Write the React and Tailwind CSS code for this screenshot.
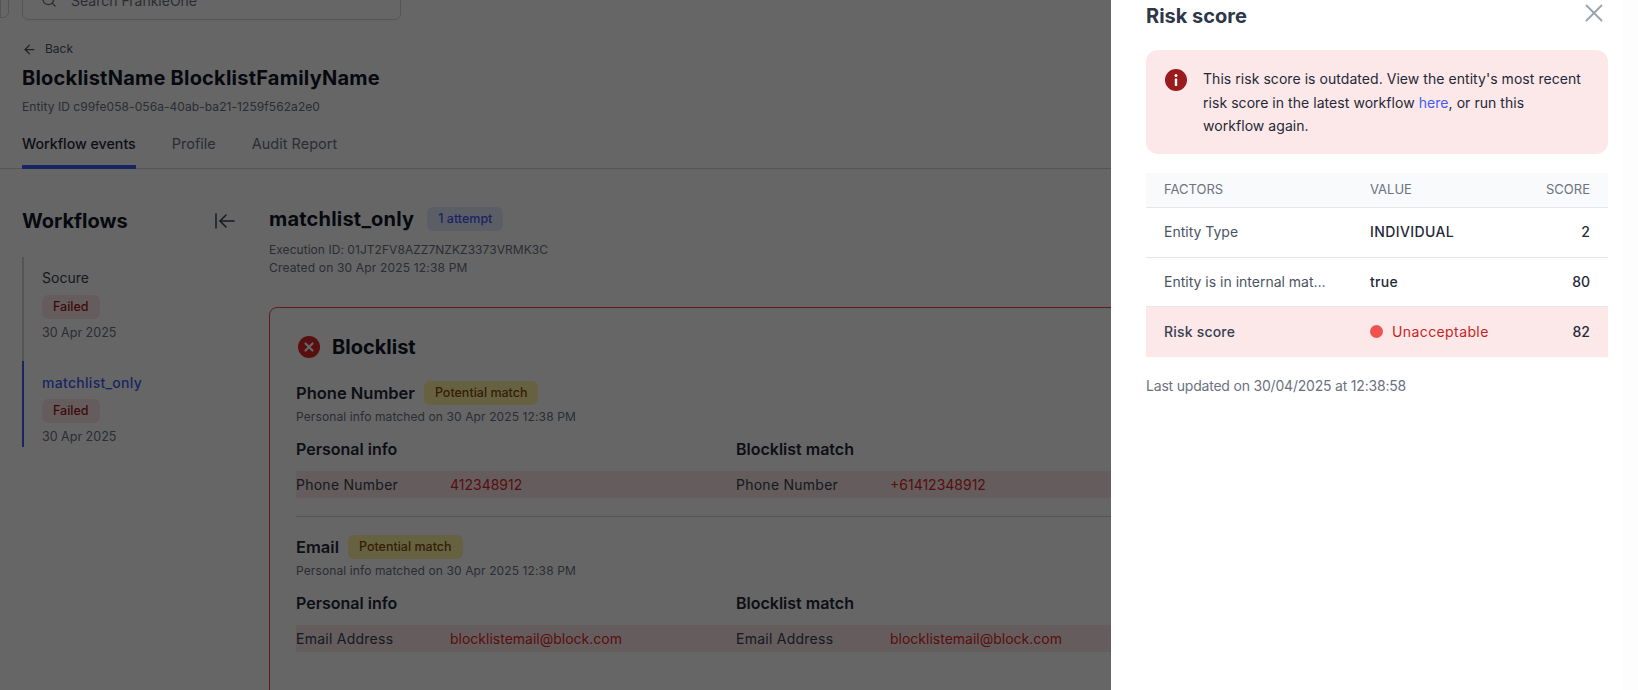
import React from 'react';
import { ArrowLeft, Search, ArrowLeftToLine, X } from 'lucide-react';

const Pill = ({ className, children }) => (
  <span className={`inline-flex h-6 items-center rounded-md px-[11px] text-[12.5px] font-medium ${className}`}>
    {children}
  </span>
);

const MatchBlock = ({ title, label, mine, theirs }) => (
  <div>
    <div className="flex items-center gap-[9px]">
      <h3 className="text-[16.5px] font-semibold leading-6 text-[#1f2937]">{title}</h3>
      <Pill className="bg-[#fef3a0] text-[#854d0e]">Potential match</Pill>
    </div>
    <p className="mt-[3px] text-[12px] leading-[18px] tracking-[0.11px] text-[#6b7280]">Personal info matched on 30 Apr 2025 12:38 PM</p>
    <div className="mt-3 grid grid-cols-[440px_441px]">
      {[['Personal info', mine], ['Blocklist match', theirs]].map(([heading, value]) => (
        <div key={heading}>
          <h4 className="text-[16px] font-semibold leading-[22px] text-[#1f2937]">{heading}</h4>
          <div className="mt-[11px] flex h-[27px] items-center bg-[#fce8e8] text-[14px] text-[#374151]">
            <span className="w-[154px] tracking-[0.25px]">{label}</span>
            <span className="text-[#dc2626]">{value}</span>
          </div>
        </div>
      ))}
    </div>
  </div>
);

const ScoreRow = ({ factor, children, score, className = '', labelClass = 'text-[#4b5563]', scoreClass = 'font-medium text-[#1f2937]' }) => (
  <div className={`flex items-center px-[18px] ${className}`}>
    <div className={`w-[206px] truncate pr-10 ${labelClass}`}>{factor}</div>
    <div className="flex-1 text-[#1f2937]">{children}</div>
    <div className={scoreClass}>{score}</div>
  </div>
);

export default function App() {
  return (
    <div className="relative h-[690px] w-full overflow-hidden bg-white font-['Inter',sans-serif]">
      {/* Page behind the drawer */}
      <div>
        <div className="flex h-5 items-end overflow-hidden">
          <div className="mb-0.5 h-10 w-[9px] rounded-r-md border border-[#d1d5db]" />
          <div className="ml-[13px] flex h-10 w-[379px] shrink-0 items-center rounded-md border border-[#d1d5db] pl-[18px] text-[14px] text-[#6b7280]">
            <Search size={16} />
            <span className="ml-[14px]">Search FrankieOne</span>
          </div>
        </div>

        <div className="border-b border-[#d1d5db] px-[22px]">
          <div className="mt-5 flex h-[18px] items-center text-[12px] text-[#4b5563]">
            <ArrowLeft size={15} className="mr-2" />
            <span>Back</span>
          </div>
          <h1 className="mt-1.5 text-[20px] font-bold leading-7 tracking-[0.22px] text-[#111827]">BlocklistName BlocklistFamilyName</h1>
          <p className="mt-1.5 text-[12px] leading-[18px] tracking-[0.07px] text-[#6b7280]">Entity ID c99fe058-056a-40ab-ba21-1259f562a2e0</p>
          <div className="mt-[18px] flex gap-9 text-[14.5px] leading-5 text-[#6b7280]">
            <div className="-mb-px border-b-4 border-[#3f5cf5] pb-[11px] text-[14.2px] font-medium text-[#1f2937]">Workflow events</div>
            <div>Profile</div>
            <div>Audit Report</div>
          </div>
        </div>

        <div className="flex pl-[22px] pt-[38px]">
          <aside className="w-[247px] shrink-0">
            <div className="flex h-7 w-[215px] items-center justify-between text-[#374151]">
              <h2 className="text-[20px] font-bold text-[#111827]">Workflows</h2>
              <ArrowLeftToLine size={24} strokeWidth={1.5} />
            </div>
            <div className="mt-[22px] text-[14px]">
              <div className="border-l-2 border-[#d1d5db] pb-[19px] pl-[18px] pt-[11px]">
                <div className="leading-5 text-[#374151]">Socure</div>
                <Pill className="mt-[7px] bg-[#fce8e8] text-[#991b1b]">Failed</Pill>
                <div className="mt-[5px] text-[12.5px] leading-[18px] text-[#6b7280]">30 Apr 2025</div>
              </div>
              <div className="border-l-2 border-[#3f5cf5] pb-px pl-[18px] pt-3">
                <div className="font-medium leading-5 tracking-[0.3px] text-[#3f5cf5]">matchlist_only</div>
                <Pill className="mt-1.5 bg-[#fce8e8] text-[#991b1b]">Failed</Pill>
                <div className="mt-[5px] text-[12.5px] leading-[18px] text-[#6b7280]">30 Apr 2025</div>
              </div>
            </div>
          </aside>

          <main className="-mt-0.5">
            <div className="flex h-7 items-center gap-[13px]">
              <h2 className="text-[20px] font-bold tracking-[0.2px] text-[#111827]">matchlist_only</h2>
              <Pill className="bg-[#e5eaff] text-[#3f5cf5]">1 attempt</Pill>
            </div>
            <p className="mt-2 text-[12px] leading-[18px] tracking-[0.05px] text-[#6b7280]">Execution ID: 01JT2FV8AZZ7NZKZ3373VRMK3C</p>
            <p className="text-[12px] leading-[18px] tracking-[0.17px] text-[#6b7280]">Created on 30 Apr 2025 12:38 PM</p>

            <section className="mt-[30px] w-[1000px] rounded-lg border border-[#ef4444] px-[26px] pt-7">
              <div className="flex h-[22px] items-center">
                <svg className="ml-0.5" width="22" height="22" viewBox="0 0 22 22">
                  <circle cx="11" cy="11" r="11" fill="#dc2626" />
                  <path d="M7.5 7.5l7 7M14.5 7.5l-7 7" stroke="#fff" strokeWidth="2.2" strokeLinecap="round" />
                </svg>
                <h2 className="ml-3 text-[20px] font-bold text-[#111827]">Blocklist</h2>
              </div>
              <div className="mt-[23px]">
                <MatchBlock title="Phone Number" label="Phone Number" mine="412348912" theirs="+61412348912" />
              </div>
              <hr className="my-[18px] border-[#d1d5db]" />
              <MatchBlock title="Email" label="Email Address" mine="blocklistemail@block.com" theirs="blocklistemail@block.com" />
              <div className="h-20" />
            </section>
          </main>
        </div>
      </div>

      <div className="absolute inset-0 bg-black/60" />

      {/* Risk score drawer */}
      <aside className="absolute bottom-0 right-0 top-0 w-[527px] bg-white pl-[35px] pr-[30px] pt-0.5">
        <div className="absolute bottom-0 right-0 top-0 w-4 bg-[#fdfdfd]" />
        <div className="flex h-7 items-center justify-between">
          <h2 className="text-[20px] font-bold text-[#2d3748]">Risk score</h2>
          <X size={30} strokeWidth={1.5} className="relative -mr-[1px] -mt-[6px] text-[#9ca3af]" />
        </div>

        <div className="mt-5 flex h-[104px] gap-4 rounded-xl bg-[#fce8e8] pl-[19px] pt-[17px]">
          <svg className="mt-0.5 shrink-0" width="22" height="22" viewBox="0 0 22 22">
            <circle cx="11" cy="11" r="11" fill="#991b1b" />
            <rect x="9.8" y="9.5" width="2.4" height="7.5" rx="0.6" fill="#fff" />
            <circle cx="11" cy="6.6" r="1.5" fill="#fff" />
          </svg>
          <p className="w-[381px] text-[14px] leading-[23.5px] tracking-[0.05px] text-[#1f2937]">
            This risk score is outdated. View the entity's most recent risk score in the latest workflow{' '}
            <span className="text-[#3f5cf5]">here</span>, or run this workflow again.
          </p>
        </div>

        <div className="mt-[19px] text-[14px]">
          <ScoreRow factor="FACTORS" score="SCORE" className="h-[35px] border-b border-[#e5e7eb] bg-[#f9fafb] text-[13px]" labelClass="text-[#6b7280]" scoreClass="text-[#6b7280]">
            <span className="text-[#6b7280]">VALUE</span>
          </ScoreRow>
          <ScoreRow factor="Entity Type" score="2" className="h-[50px] border-b border-[#e5e7eb] pb-0.5">
            <span className="font-medium tracking-[0.4px]">INDIVIDUAL</span>
          </ScoreRow>
          <ScoreRow factor="Entity is in internal matchlist" score="80" className="h-[49px] border-b border-[#e5e7eb] pb-0.5">
            <span className="font-medium tracking-[0.3px]">true</span>
          </ScoreRow>
          <ScoreRow factor="Risk score" score="82" className="h-[50px] bg-[#fce8e8] pb-0.5" labelClass="font-medium tracking-[0.2px] text-[#374151]">
            <span className="flex items-center gap-[9px] tracking-[0.4px] text-[#c81e1e]">
              <span className="h-[13px] w-[13px] rounded-full bg-[#ef5350]" />
              Unacceptable
            </span>
          </ScoreRow>
        </div>

        <p className="mt-[18px] text-[14px] tracking-[-0.2px] text-[#6b7280]">Last updated on 30/04/2025 at 12:38:58</p>
      </aside>
    </div>
  );
}
